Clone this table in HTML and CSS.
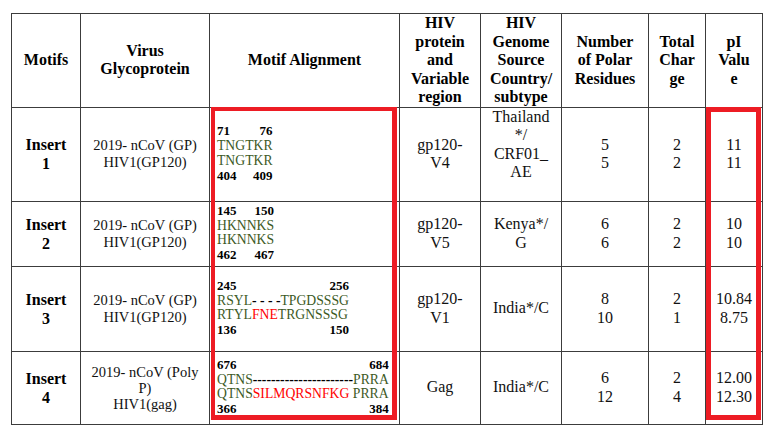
FILE: index.html
```html
<!DOCTYPE html>
<html lang="en">
<head>
<meta charset="utf-8">
<title>Motif comparison table</title>
<link rel="stylesheet" href="styles.css">
</head>
<body>
<div class="wrap">
  <table class="grid">
    <colgroup>
      <col class="c1"><col class="c2"><col class="c3"><col class="c4">
      <col class="c5"><col class="c6"><col class="c7"><col class="c8">
    </colgroup>
    <thead>
      <tr class="r-head">
        <th>Motifs</th>
        <th>Virus<br>Glycoprotein</th>
        <th>Motif Alignment</th>
        <th>HIV<br>protein<br>and<br>Variable<br>region</th>
        <th>HIV<br>Genome<br>Source<br>Country/<br>subtype</th>
        <th>Number<br>of Polar<br>Residues</th>
        <th>Total<br>Char<br>ge</th>
        <th>pI<br>Valu<br>e</th>
      </tr>
    </thead>
    <tbody>
      <tr class="r1">
        <td class="motif">Insert<br>1</td>
        <td class="virus">2019- nCoV (GP)<br>HIV1(GP120)</td>
        <td class="align">
          <div class="aln">
            <div class="nums"><span>71</span><span>76</span></div>
            <div class="seq">TNGTKR</div>
            <div class="seq">TNGTKR</div>
            <div class="nums"><span>404</span><span>409</span></div>
          </div>
        </td>
        <td class="val">gp120-<br>V4</td>
        <td class="val lift">Thailand<br>*/<br>CRF01_<br>AE</td>
        <td class="val">5<br>5</td>
        <td class="val">2<br>2</td>
        <td class="val">11<br>11</td>
      </tr>
      <tr class="r2">
        <td class="motif">Insert<br>2</td>
        <td class="virus">2019- nCoV (GP)<br>HIV1(GP120)</td>
        <td class="align">
          <div class="aln">
            <div class="nums"><span>145</span><span>150</span></div>
            <div class="seq">HKNNKS</div>
            <div class="seq">HKNNKS</div>
            <div class="nums"><span>462</span><span>467</span></div>
          </div>
        </td>
        <td class="val">gp120-<br>V5</td>
        <td class="val">Kenya*/<br>G</td>
        <td class="val">6<br>6</td>
        <td class="val">2<br>2</td>
        <td class="val">10<br>10</td>
      </tr>
      <tr class="r3">
        <td class="motif">Insert<br>3</td>
        <td class="virus">2019- nCoV (GP)<br>HIV1(GP120)</td>
        <td class="align">
          <div class="aln">
            <div class="nums"><span>245</span><span>256</span></div>
            <div class="seq">RSYL<b class="gap">- - - -</b>TPGDSSSG</div>
            <div class="seq">RTYL<span class="ins">FNE</span>TRGNSSSG</div>
            <div class="nums"><span>136</span><span>150</span></div>
          </div>
        </td>
        <td class="val">gp120-<br>V1</td>
        <td class="val">India*/C</td>
        <td class="val">8<br>10</td>
        <td class="val">2<br>1</td>
        <td class="val">10.84<br>8.75</td>
      </tr>
      <tr class="r4">
        <td class="motif">Insert<br>4</td>
        <td class="virus tight">2019- nCoV (Poly<br>P)<br>HIV1(gag)</td>
        <td class="align">
          <div class="aln">
            <div class="nums"><span>676</span><span>684</span></div>
            <div class="seq">QTNS<b class="gap">----------------------</b>PRRA</div>
            <div class="seq">QTNS<span class="ins">SILMQRSNFKG</span> PRRA</div>
            <div class="nums"><span>366</span><span>384</span></div>
          </div>
        </td>
        <td class="val">Gag</td>
        <td class="val">India*/C</td>
        <td class="val">6<br>12</td>
        <td class="val">2<br>4</td>
        <td class="val">12.00<br>12.30</td>
      </tr>
    </tbody>
  </table>
  <div class="mark mark-align"></div>
  <div class="mark mark-pi"></div>
</div>
</body>
</html>
```

FILE: styles.css
```css
html, body {
  margin: 0;
  padding: 0;
  background: #ffffff;
}

body {
  font-family: "Liberation Serif", "Times New Roman", serif;
  color: #111111;
}

.wrap {
  position: relative;
  width: 751px;
  margin: 13px 0 0 11px;
}

.grid {
  border-collapse: collapse;
  table-layout: fixed;
  width: 751px;
  font-family: "Liberation Serif", "Times New Roman", serif;
}

.c1 { width: 69px; }
.c2 { width: 129px; }
.c3 { width: 190px; }
.c4 { width: 81px; }
.c5 { width: 81px; }
.c6 { width: 87px; }
.c7 { width: 57px; }
.c8 { width: 57px; }

.grid th,
.grid td {
  border: 1px solid #3c3c3c;
  padding: 0;
  text-align: center;
  vertical-align: middle;
}

.grid th:nth-child(2),
.grid td:nth-child(2),
.grid th:nth-child(5),
.grid td:nth-child(5),
.grid th:nth-child(6),
.grid td:nth-child(6),
.grid th:nth-child(7),
.grid td:nth-child(7),
.grid th:nth-child(8),
.grid td:nth-child(8) {
  border-left-color: #8c8c8c;
}

.grid th {
  font-size: 16px;
  line-height: 18.5px;
  font-weight: bold;
  color: #000000;
}

.r-head { height: 93px; }
.r1 { height: 93px; }
.r2 { height: 65px; }
.r3 { height: 85px; }
.r4 { height: 73px; }

.motif {
  font-size: 16px;
  line-height: 19px;
  font-weight: bold;
  color: #000000;
}

.virus {
  font-size: 14.5px;
  line-height: 17px;
}

.virus.tight {
  line-height: 16px;
}

.val {
  font-size: 16px;
  line-height: 18.5px;
}

.grid td.lift {
  padding-bottom: 19px;
}

.grid td.align {
  text-align: left;
  padding-left: 7px;
}

.aln {
  display: inline-block;
  font-size: 13.7px;
  line-height: 14.7px;
  white-space: nowrap;
}

.nums {
  display: flex;
  justify-content: space-between;
  font-weight: bold;
  font-size: 13px;
  color: #000000;
}

.seq {
  color: #3d5a1f;
}

.gap {
  color: #000000;
  font-weight: bold;
}

.ins {
  color: #ff0000;
}

.mark {
  position: absolute;
  border-style: solid;
  border-color: #ed1c24;
  box-sizing: border-box;
  pointer-events: none;
}

.mark-align {
  left: 200px;
  top: 94px;
  width: 186px;
  height: 313px;
  border-width: 4px 5px 5px 4px;
}

.mark-pi {
  left: 695px;
  top: 94px;
  width: 55px;
  height: 313px;
  border-width: 5px;
}
```
